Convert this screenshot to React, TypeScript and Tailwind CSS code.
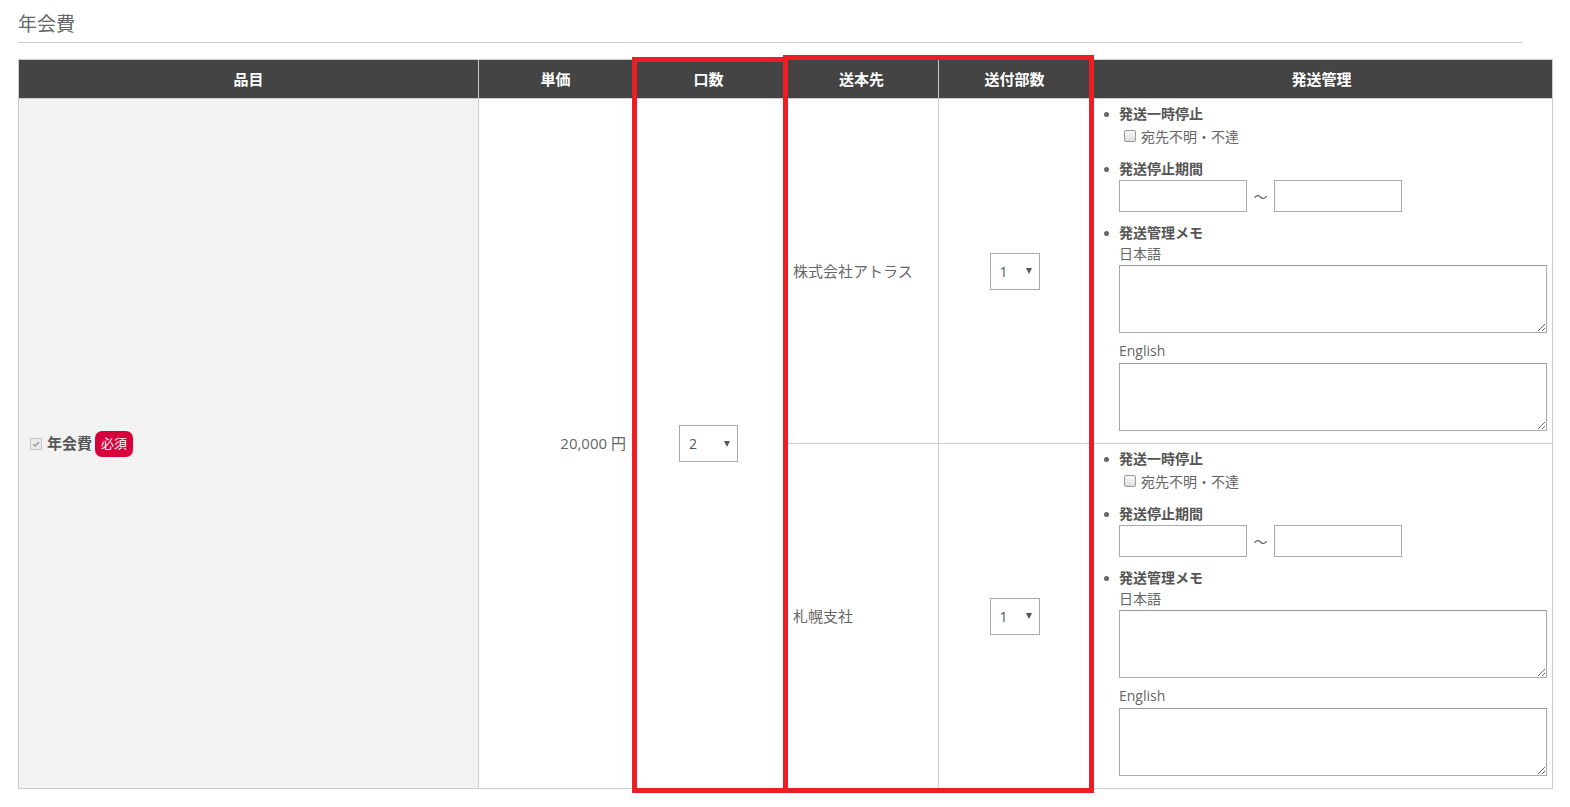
import React from 'react'

const FONT = "font-['Open_Sans','Noto_Sans_CJK_JP',sans-serif]"

// fake select box with small triangle, like the old IE look
const SelectBox = ({ value, className }: { value: string; className: string }) => (
  <div
    className={`inline-flex h-[37px] items-center justify-between border border-[#aaa] bg-white pl-[9px] pr-[7px] text-[14px] text-[#555] ${className}`}
  >
    <span>{value}</span>
    <span className="h-0 w-0 border-x-[3px] border-t-[6px] border-x-transparent border-t-[#555]" />
  </div>
)

const Bullet = () => <span className="mt-[8px] mr-[10px] h-[5px] w-[5px] shrink-0 rounded-full bg-[#666]" />

const ShipBlock = () => (
  <div className="flex flex-col pl-[13px] pr-[5px] pt-[5px] pb-[12px]">
    {/* 発送一時停止 */}
    <div className="flex">
      <Bullet />
      <div className="flex-1">
        <p className="text-[14px] font-bold leading-[20px] text-[#555]">発送一時停止</p>
        <label className="mt-[2px] flex h-[20px] items-center gap-[5px] pl-[5px]">
          <span className="h-[12px] w-[12px] rounded-[2px] border border-[#999] bg-gradient-to-b from-[#fafafa] to-[#dcdcdc]" />
          <span className="text-[14px] text-[#666]">宛先不明・不達</span>
        </label>
      </div>
    </div>

    {/* 発送停止期間 */}
    <div className="mt-[13px] flex">
      <Bullet />
      <div className="flex-1">
        <p className="text-[14px] font-bold leading-[20px] text-[#555]">発送停止期間</p>
        <div className="mt-[1px] flex items-center">
          <input className="h-[32px] w-[128px] border border-[#aaa] bg-white outline-none" />
          <span className="w-[27px] text-center text-[14px] text-[#666]">～</span>
          <input className="h-[32px] w-[128px] border border-[#aaa] bg-white outline-none" />
        </div>
      </div>
    </div>

    {/* 発送管理メモ */}
    <div className="mt-[11px] flex">
      <Bullet />
      <div className="flex-1">
        <p className="text-[14px] font-bold leading-[20px] text-[#555]">発送管理メモ</p>
        <p className="mt-[1px] text-[14px] leading-[20px] text-[#666]">日本語</p>
        <textarea className="mt-[1px] block h-[68px] w-full border border-[#aaa] border-t-[#999] bg-white outline-none" />
        <p className="mt-[8px] text-[14px] leading-[20px] text-[#666]">English</p>
        <textarea className="mt-[2px] block h-[68px] w-full border border-[#aaa] border-t-[#999] bg-white outline-none" />
      </div>
    </div>
  </div>
)

export default function App() {
  const th = 'h-[39px] border border-[#ccc] bg-[#444] text-center text-[15px] font-bold text-white'
  const td = 'border border-[#ccc] p-0'

  return (
    <div className={`relative min-h-screen w-full bg-white px-[18px] ${FONT}`}>
      {/* Title */}
      <div className="mr-[30px] border-b border-[#ccc] pt-[11px] pb-[5px]">
        <h2 className="text-[19px] leading-[26px] text-[#666]">年会費</h2>
      </div>

      <table className="mt-[16px] w-[1534px] table-fixed border-collapse">
        <colgroup>
          <col className="w-[460px]" />
          <col className="w-[154px]" />
          <col className="w-[152px]" />
          <col className="w-[154px]" />
          <col className="w-[152px]" />
          <col className="w-[462px]" />
        </colgroup>
        <thead>
          <tr>
            <th className={th}>品目</th>
            <th className={th}>単価</th>
            <th className={th}>口数</th>
            <th className={th}>送本先</th>
            <th className={th}>送付部数</th>
            <th className={th}>発送管理</th>
          </tr>
        </thead>
        <tbody>
          <tr>
            <td rowSpan={2} className={`${td} bg-[#f2f2f2] pl-[11px] align-middle`}>
              <div className="flex items-center">
                <span className="flex h-[12px] w-[12px] items-center justify-center border border-[#c4c4c4] bg-[#eaeaea]">
                  <svg viewBox="0 0 10 10" className="h-[8px] w-[8px]">
                    <path d="M1.5 5.2 L4 7.6 L8.6 2.4" fill="none" stroke="#999" strokeWidth="1.8" />
                  </svg>
                </span>
                <span className="ml-[5px] text-[15px] font-bold text-[#555]">年会費</span>
                <span className="ml-[3px] flex h-[26px] items-center rounded-[7px] bg-[#d7003a] px-[6px] text-[13px] text-white">
                  必須
                </span>
              </div>
            </td>
            <td rowSpan={2} className={`${td} pr-[6px] text-right align-middle text-[15px] text-[#666]`}>
              20,000 円
            </td>
            <td rowSpan={2} className={`${td} text-center align-middle`}>
              <SelectBox value="2" className="w-[59px]" />
            </td>
            <td className={`${td} pl-[8px] align-middle text-[15px] text-[#666]`}>株式会社アトラス</td>
            <td className={`${td} text-center align-middle`}>
              <SelectBox value="1" className="w-[50px]" />
            </td>
            <td className={`${td} align-top`}>
              <ShipBlock />
            </td>
          </tr>
          <tr>
            <td className={`${td} pl-[8px] align-middle text-[15px] text-[#666]`}>札幌支社</td>
            <td className={`${td} text-center align-middle`}>
              <SelectBox value="1" className="w-[50px]" />
            </td>
            <td className={`${td} align-top`}>
              <ShipBlock />
            </td>
          </tr>
        </tbody>
      </table>

      {/* red annotation frames drawn over the table */}
      <div className="pointer-events-none absolute left-[632px] top-[57px] h-[736px] w-[156px] border-[5px] border-[#ee1d23]" />
      <div className="pointer-events-none absolute left-[783px] top-[55px] h-[738px] w-[311px] border-[5px] border-[#ee1d23]" />
    </div>
  )
}
